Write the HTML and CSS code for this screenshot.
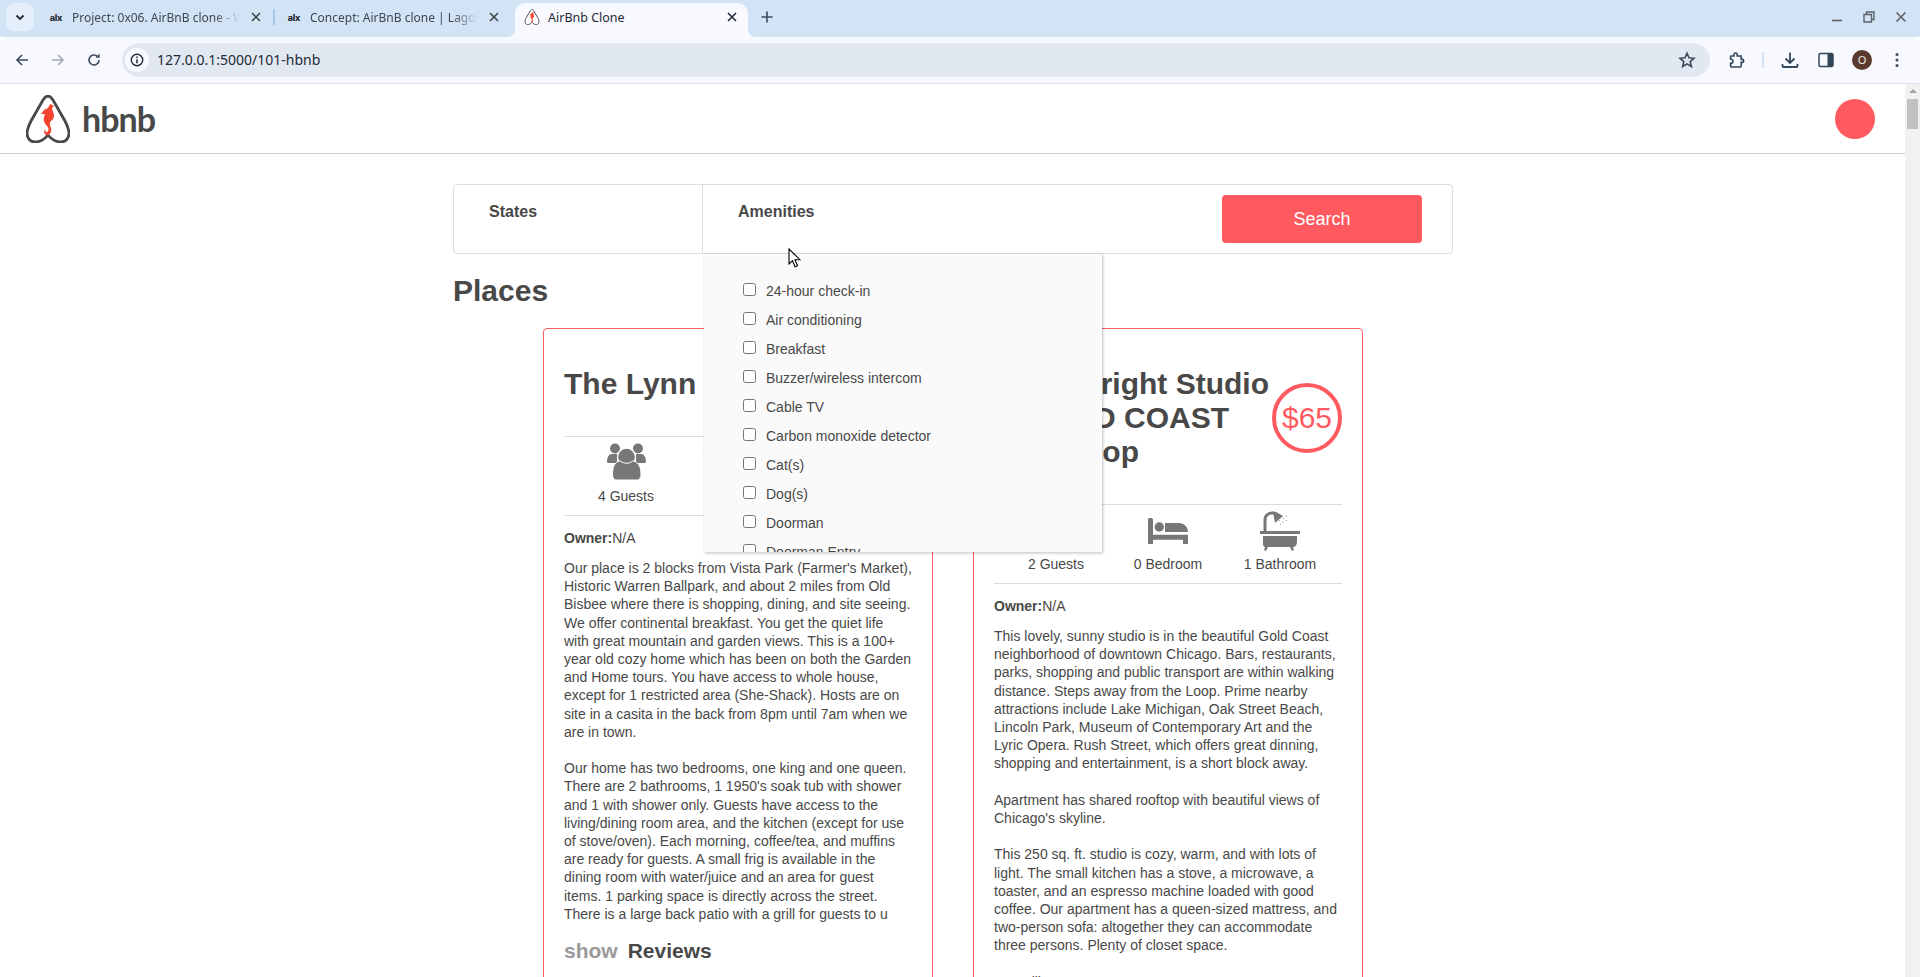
FILE: index.html
```html
<!DOCTYPE html>
<html lang="en">
<head>
    <meta charset="UTF-8">
    <meta name="viewport" content="width=device-width, initial-scale=1.0">
    <title>AirBnb Clone</title>
    <link rel="stylesheet" href="styles.css">
</head>
<body>
    <svg class="defs" width="0" height="0">
        <symbol id="belo" viewBox="0 0 44 48">
            <path d="M22 40C18 45 13 47 9 47 4 47 1 43 1 38 1 34 3 30 5 26L17 5C19 2 20 1 22 1 24 1 25 2 27 5L39 26C41 30 43 34 43 38 43 43 40 47 35 47 31 47 26 45 22 40Z" fill="#fff" stroke="#484848" stroke-width="2.8"/>
            <path d="M24 9 22 13 18 15 15 19 19 19 18 22C17 26 19 29 21 31 23 33 23 36 21 37 19 38 19 35 20 35 18 34 17 38 20 40 24 41 26 37 25 33 24 30 23 28 25 26 28 24 29 20 27 17L26 13 28 11Z" fill="#f4442e"/>
        </symbol>
    </svg>

    <!-- browser chrome -->
    <div class="tabstrip">
        <div class="tab-menu">
            <svg width="12" height="12" viewBox="0 0 12 12"><path d="M2.5 4.5 6 8l3.5-3.5" fill="none" stroke="#1f2937" stroke-width="1.8"/></svg>
        </div>
        <div class="tab">
            <span class="favicon-alx">alx</span>
            <span class="tab-title">Project: 0x06. AirBnB clone - W</span>
            <svg class="tab-close" width="16" height="16" viewBox="0 0 16 16"><path d="M4 4l8 8M12 4l-8 8" stroke="#3c4043" stroke-width="1.5"/></svg>
        </div>
        <div class="tab-sep"></div>
        <div class="tab">
            <span class="favicon-alx">alx</span>
            <span class="tab-title">Concept: AirBnB clone | Lagos</span>
            <svg class="tab-close" width="16" height="16" viewBox="0 0 16 16"><path d="M4 4l8 8M12 4l-8 8" stroke="#3c4043" stroke-width="1.5"/></svg>
        </div>
        <div class="tab tab-active">
            <svg class="favicon" width="16" height="16"><use href="#belo"/></svg>
            <span class="tab-title">AirBnb Clone</span>
            <svg class="tab-close" width="16" height="16" viewBox="0 0 16 16"><path d="M4 4l8 8M12 4l-8 8" stroke="#1f2937" stroke-width="1.6"/></svg>
        </div>
        <svg class="new-tab" width="16" height="16" viewBox="0 0 16 16"><path d="M8 2.5v11M2.5 8h11" stroke="#3c4a5c" stroke-width="1.6"/></svg>
        <div class="window-controls">
            <svg width="12" height="12" viewBox="0 0 12 12"><path d="M1 9.5h10" stroke="#5f6368" stroke-width="1.6"/></svg>
            <svg width="12" height="12" viewBox="0 0 12 12"><path d="M3.5 3V1h7.5v7.5H9" fill="none" stroke="#5f6368" stroke-width="1.4"/><path d="M1 3.5h7.5V11H1z" fill="none" stroke="#5f6368" stroke-width="1.4"/></svg>
            <svg width="12" height="12" viewBox="0 0 12 12"><path d="M1.5 1.5l9 9M10.5 1.5l-9 9" stroke="#5f6368" stroke-width="1.6"/></svg>
        </div>
    </div>
    <div class="toolbar">
        <div class="tool">
            <svg width="16" height="16" viewBox="0 0 16 16"><path d="M14 8H3M8 3 3 8l5 5" fill="none" stroke="#3c4a5c" stroke-width="1.6"/></svg>
        </div>
        <div class="tool">
            <svg width="16" height="16" viewBox="0 0 16 16"><path d="M2 8h11M8 3l5 5-5 5" fill="none" stroke="#a3a9b2" stroke-width="1.6"/></svg>
        </div>
        <div class="tool">
            <svg width="16" height="16" viewBox="0 0 16 16"><path d="M13 8a5 5 0 1 1-1.6-3.7" fill="none" stroke="#3c4a5c" stroke-width="1.6"/><path d="M13.6 1.6v4.2H9.4z" fill="#3c4a5c"/></svg>
        </div>
        <div class="omnibox">
            <div class="site-info">
                <svg width="14" height="14" viewBox="0 0 14 14"><circle cx="7" cy="7" r="5.7" fill="none" stroke="#1f2937" stroke-width="1.4"/><path d="M7 6.2v4M7 3.6v1.3" stroke="#1f2937" stroke-width="1.5"/></svg>
            </div>
            <span class="url">127.0.0.1:5000/101-hbnb</span>
            <svg class="star" width="18" height="18" viewBox="0 0 18 18"><path d="M9 2.2l2 4.6 5 .5-3.8 3.3 1.2 4.9L9 12.9l-4.4 2.6 1.2-4.9L2 7.3l5-.5z" fill="none" stroke="#3c4a5c" stroke-width="1.6"/></svg>
        </div>
        <div class="tool tool-ext">
            <svg width="18" height="18" viewBox="0 0 18 18"><path d="M3 5h3V3.600a1.600 1.600 0 0 1 3.200 0V5h4v3.400h1a1.500 1.500 0 0 1 0 3h-1V15a1 1 0 0 1-1 1H3.600a1 1 0 0 1-1-1v-2.800c2 .2 2.400-1 2.400-2S3.500 8 2.600 8V5.600A.6.6 0 0 1 3 5z" fill="none" stroke="#33475b" stroke-width="1.6"/></svg>
        </div>
        <div class="tool-sep"></div>
        <div class="tool">
            <svg width="18" height="18" viewBox="0 0 18 18"><path d="M9 1.500v10M4.500 7.500 9 12l4.500-4.500" fill="none" stroke="#33475b" stroke-width="1.8"/><path d="M1.500 13v2a1 1 0 0 0 1 1h13a1 1 0 0 0 1-1v-2" fill="none" stroke="#33475b" stroke-width="1.8"/></svg>
        </div>
        <div class="tool">
            <svg width="16" height="16" viewBox="0 0 16 16"><rect x="1" y="1.500" width="14" height="13" rx="1.500" fill="none" stroke="#33475b" stroke-width="1.500"/><path d="M9.500 1.500H14a1 1 0 0 1 1 1v11a1 1 0 0 1-1 1H9.500z" fill="#33475b"/></svg>
        </div>
        <div class="tool"><span class="avatar">O</span></div>
        <div class="tool tool-menu">
            <svg width="16" height="16" viewBox="0 0 16 16"><circle cx="8" cy="2.500" r="1.500" fill="#3c4a5c"/><circle cx="8" cy="8" r="1.500" fill="#3c4a5c"/><circle cx="8" cy="13.500" r="1.500" fill="#3c4a5c"/></svg>
        </div>
    </div>

    <div class="viewport">
        <div class="page">
            <header class="site-header">
                <div class="logo">
                    <svg width="44" height="48"><use href="#belo"/></svg>
                    <span class="logo-text">hbnb</span>
                </div>
                <div class="user-dot"></div>
            </header>

            <main class="content">
                <section class="filters">
                    <div class="filter filter-states">
                        <h3>States</h3>
                    </div>
                    <div class="filter filter-amenities">
                        <h3>Amenities</h3>
                        <div class="popover">
                            <ul>
                                <li><input type="checkbox"><span>24-hour check-in</span></li>
                                <li><input type="checkbox"><span>Air conditioning</span></li>
                                <li><input type="checkbox"><span>Breakfast</span></li>
                                <li><input type="checkbox"><span>Buzzer/wireless intercom</span></li>
                                <li><input type="checkbox"><span>Cable TV</span></li>
                                <li><input type="checkbox"><span>Carbon monoxide detector</span></li>
                                <li><input type="checkbox"><span>Cat(s)</span></li>
                                <li><input type="checkbox"><span>Dog(s)</span></li>
                                <li><input type="checkbox"><span>Doorman</span></li>
                                <li><input type="checkbox"><span>Doorman Entry</span></li>
                            </ul>
                        </div>
                    </div>
                    <button class="search-btn">Search</button>
                </section>

                <h1 class="places-title">Places</h1>

                <section class="places">
                    <article class="place">
                        <div class="place-head">
                            <h2>The Lynn</h2>
                        </div>
                        <div class="information">
                            <div class="info-item">
                                <svg class="icon" width="40" height="40" viewBox="0 0 40 40">
                                    <circle cx="9" cy="5.500" r="5"/><circle cx="32" cy="5.500" r="5"/>
                                    <path d="M1 19c0-5 2-8 5-8h5v9H2zM40 19c0-5-2-8-5-8h-5v9h9z"/>
                                    <circle cx="20.500" cy="14" r="9" stroke="#fff" stroke-width="1.400"/>
                                    <path d="M6.500 31c0-8 3-13 8-13 3 3 9 3 12 0 5 0 8.500 5 8.500 13 0 4-2 6-4 6H10.500c-2 0-4-2-4-6z" stroke="#fff" stroke-width="1"/>
                                </svg>
                                <span>4 Guests</span>
                            </div>
                            <div class="info-item"><span>0 Bedroom</span></div>
                            <div class="info-item"><span>1 Bathroom</span></div>
                        </div>
                        <p class="owner"><strong>Owner:</strong>N/A</p>
                        <p class="description">Our place is 2 blocks from Vista Park (Farmer's Market), Historic Warren Ballpark, and about 2 miles from Old Bisbee where there is shopping, dining, and site seeing. We offer continental breakfast. You get the quiet life with great mountain and garden views. This is a 100+ year old cozy home which has been on both the Garden and Home tours. You have access to whole house, except for 1 restricted area (She-Shack). Hosts are on site in a casita in the back from 8pm until 7am when we are in town.<br><br>Our home has two bedrooms, one king and one queen. There are 2 bathrooms, 1 1950's soak tub with shower and 1 with shower only. Guests have access to the living/dining room area, and the kitchen (except for use of stove/oven). Each morning, coffee/tea, and muffins are ready for guests. A small frig is available in the dining room with water/juice and an area for guest items. 1 parking space is directly across the street. There is a large back patio with a grill for guests to u</p>
                        <div class="reviews-head">
                            <span class="show">show</span>
                            <span class="reviews">Reviews</span>
                        </div>
                    </article>

                    <article class="place">
                        <div class="place-head">
                            <h2>Quiet Bright Studio in GOLD COAST near Loop</h2>
                            <div class="price">$65</div>
                        </div>
                        <div class="information">
                            <div class="info-item">
                                <span class="icon-gap"></span>
                                <span>2 Guests</span>
                            </div>
                            <div class="info-item">
                                <svg class="icon" width="40" height="40" viewBox="0 0 40 40">
                                    <path d="M1.500 7h2c1 0 1.500 1 1.500 2v14.700h35V33h-5v-4.300H5V33H0V8.500C0 7.500.5 7 1.500 7z"/>
                                    <circle cx="11.300" cy="16" r="4.700"/>
                                    <path d="M17 12h14c5 0 9 4 9 9H17z"/>
                                </svg>
                                <span>0 Bedroom</span>
                            </div>
                            <div class="info-item">
                                <svg class="icon" width="40" height="40" viewBox="0 0 40 40">
                                    <path d="M0 20h40v3H0z"/>
                                    <path d="M3 25h34v6c0 3-2 5-4 5l1 3-2 1-2-4H8l-2 4-2-1 1-3c-2 0-2-3-2-5z"/>
                                    <path d="M5 20V9c0-5 4-7 7-7h3" fill="none" stroke="#777" stroke-width="3"/>
                                    <path d="M13 1l3 0 7 4-8 7z"/>
                                    <path d="M19 10l1-1M22 12l1-1M23 8l1-1M26 6l1-1M26 10l1-1M20 14l1-1" stroke="#999" stroke-width="1"/>
                                </svg>
                                <span>1 Bathroom</span>
                            </div>
                        </div>
                        <p class="owner"><strong>Owner:</strong>N/A</p>
                        <p class="description">This lovely, sunny studio is in the beautiful Gold Coast neighborhood of downtown Chicago. Bars, restaurants, parks, shopping and public transport are within walking distance. Steps away from the Loop. Prime nearby attractions include Lake Michigan, Oak Street Beach, Lincoln Park, Museum of Contemporary Art and the Lyric Opera. Rush Street, which offers great dinning, shopping and entertainment, is a short block away.<br><br>Apartment has shared rooftop with beautiful views of Chicago's skyline.<br><br>This 250 sq. ft. studio is cozy, warm, and with lots of light. The small kitchen has a stove, a microwave, a toaster, and an espresso machine loaded with good coffee. Our apartment has a queen-sized mattress, and two-person sofa: altogether they can accommodate three persons. Plenty of closet space.<br><br>You will soon see a sunny room</p>
                    </article>
                </section>
            </main>
        </div>

        <div class="scrollbar">
            <div class="scroll-up"></div>
            <div class="scroll-thumb"></div>
        </div>
    </div>

    <svg class="cursor" width="13" height="20" viewBox="0 0 13 20"><path d="M1 1v15l3.500-3.300 2.500 6 2.500-1-2.500-6H12z" fill="#fff" stroke="#000" stroke-width="1.100"/></svg>
</body>
</html>
```

FILE: styles.css
```css
* {
    box-sizing: border-box;
}
html, body {
    margin: 0;
    height: 977px;
    overflow: hidden;
}
body {
    font-family: "Liberation Sans", Arial, sans-serif;
    color: #484848;
    background-color: #fff;
    position: relative;
}
.defs {
    position: absolute;
}

/* browser chrome */
.tabstrip {
    height: 37px;
    background-color: #d3e3f6;
    display: flex;
    align-items: flex-start;
    padding: 3px 0 0 6px;
    font-family: "Noto Sans", sans-serif;
    font-size: 12px;
}
.tab-menu {
    width: 28px;
    height: 28px;
    border-radius: 8px;
    background-color: #e4eefb;
    display: flex;
    align-items: center;
    justify-content: center;
    margin-right: 5px;
}
.tab {
    width: 233px;
    height: 34px;
    padding: 0 8px 6px 9px;
    display: flex;
    align-items: center;
    color: #3f4650;
    position: relative;
}
.tab-sep {
    width: 2px;
    height: 16px;
    margin: 6px 2px 0 1px;
    background-color: #a5c8ef;
}
.tab-active {
    margin-left: 5px;
    background-color: #f7f9fe;
    border-radius: 10px 10px 0 0;
    color: #1f2937;
    font-size: 12.5px;
}
.tab-active::before,
.tab-active::after {
    content: "";
    position: absolute;
    bottom: 0;
    width: 8px;
    height: 8px;
}
.tab-active::before {
    left: -8px;
    background: radial-gradient(circle at 0 0, transparent 8px, #f7f9fe 8px);
}
.tab-active::after {
    right: -8px;
    background: radial-gradient(circle at 100% 0, transparent 8px, #f7f9fe 8px);
}
.favicon-alx {
    width: 16px;
    flex: none;
    font-family: Inter, sans-serif;
    font-size: 9px;
    font-weight: 800;
    letter-spacing: -0.3px;
    text-align: center;
    color: #2b2f36;
}
.favicon {
    flex: none;
}
.tab-title {
    flex: 1;
    margin-left: 8px;
    white-space: nowrap;
    overflow: hidden;
    -webkit-mask-image: linear-gradient(to right, #000 85%, transparent 100%);
    mask-image: linear-gradient(to right, #000 85%, transparent 100%);
}
.tab-active .tab-title {
    -webkit-mask-image: none;
    mask-image: none;
}
.tab-close {
    flex: none;
    margin-left: 8px;
}
.new-tab {
    margin: 6px 0 0 11px;
}
.window-controls {
    margin-left: auto;
    padding: 8px 13px 0 0;
    display: flex;
    gap: 20px;
}

.toolbar {
    height: 47px;
    background-color: #f7f9fe;
    border-bottom: 1px solid #dfe4ec;
    border-radius: 8px 8px 0 0;
    display: flex;
    align-items: center;
    padding: 0 0 1px 4px;
    font-family: "Noto Sans", sans-serif;
}
.tool {
    width: 36px;
    height: 36px;
    flex: none;
    display: flex;
    align-items: center;
    justify-content: center;
}
.omnibox {
    width: 1588px;
    height: 34px;
    margin-left: 10px;
    border-radius: 17px;
    background-color: #e2e8f1;
    display: flex;
    align-items: center;
    padding: 0 14px 0 3px;
}
.site-info {
    width: 24px;
    height: 24px;
    border-radius: 12px;
    background-color: #f7f9fe;
    display: flex;
    align-items: center;
    justify-content: center;
}
.url {
    margin-left: 8px;
    font-size: 14px;
    color: #1f2937;
}
.star {
    margin-left: auto;
}
.tool-ext {
    margin-left: 9px;
}
.tool-sep {
    width: 2px;
    height: 16px;
    margin: 0 8px 0 7px;
    background-color: #cfe2f8;
}
.tool-menu {
    margin-left: -1px;
}
.avatar {
    width: 20px;
    height: 20px;
    border-radius: 50%;
    background-color: #5a3a2e;
    color: #f3e9e4;
    font-size: 11px;
    display: flex;
    align-items: center;
    justify-content: center;
}

/* page */
.viewport {
    height: 893px;
    display: flex;
}
.page {
    flex: 1;
    height: 893px;
    overflow: hidden;
}
.scrollbar {
    width: 15px;
    background-color: #f1f1f1;
    display: flex;
    flex-direction: column;
    align-items: center;
}
.scroll-up {
    margin-top: 5px;
    width: 0;
    height: 0;
    border-left: 4px solid transparent;
    border-right: 4px solid transparent;
    border-bottom: 4px solid #a3a3a3;
}
.scroll-thumb {
    width: 11px;
    height: 30px;
    margin-top: 6px;
    background-color: #c1c1c1;
}

.site-header {
    height: 70px;
    border-bottom: 1px solid #ccc;
    padding: 0 30px 0 26px;
    display: flex;
    align-items: center;
    justify-content: space-between;
}
.logo {
    display: flex;
    align-items: center;
    gap: 12px;
}
.logo-text {
    font-family: Lato, sans-serif;
    font-size: 34px;
    font-weight: 700;
    letter-spacing: -1px;
    color: #484848;
}
.user-dot {
    width: 40px;
    height: 40px;
    border-radius: 50%;
    background-color: #ff5a5f;
}

.content {
    width: 1000px;
    margin: 30px auto 0 453px;
}
.filters {
    height: 70px;
    border: 1px solid #ddd;
    border-radius: 4px;
    display: flex;
    align-items: center;
    padding-right: 30px;
}
.filter {
    height: 100%;
    padding-left: 35px;
}
.filter h3 {
    margin: 18px 0 0;
    font-size: 16px;
    line-height: 18px;
    color: #484848;
}
.filter-states {
    width: 249px;
    border-right: 1px solid #ddd;
}
.filter-amenities {
    flex: 1;
    position: relative;
}
.popover {
    position: absolute;
    top: 69px;
    left: 1px;
    width: 398px;
    height: 298px;
    background-color: #fafafa;
    box-shadow: 1px 1px 3px rgba(0, 0, 0, 0.25);
    overflow: hidden;
    z-index: 5;
    padding-top: 22px;
}
.popover ul {
    list-style: none;
    margin: 0;
    padding: 0 0 0 39px;
}
.popover li {
    height: 29px;
    display: flex;
    align-items: center;
    font-size: 14px;
}
.popover input {
    width: 13px;
    height: 13px;
    margin: 0 10px 2px 0;
}
.search-btn {
    width: 200px;
    height: 48px;
    border: none;
    border-radius: 4px;
    background-color: #ff5a5f;
    color: #fff;
    font-family: inherit;
    font-size: 18px;
}

.places-title {
    margin: 20px 0;
    font-size: 30px;
    line-height: 34px;
    color: #484848;
}
.places {
    display: flex;
    justify-content: center;
    gap: 40px;
}
.place {
    width: 390px;
    height: 900px;
    flex: none;
    border: 1px solid #ff5a5f;
    border-radius: 4px;
    padding: 20px;
}
.place-head {
    margin: 18px 0 35px;
    display: flex;
    align-items: center;
}
.place-head h2 {
    flex: 1;
    margin: 0;
    font-size: 30px;
    line-height: 34px;
    color: #484848;
}
.price {
    width: 70px;
    height: 70px;
    flex: none;
    border: 4px solid #ff5a5f;
    border-radius: 50%;
    color: #ff5a5f;
    font-size: 30px;
    display: flex;
    align-items: center;
    justify-content: center;
}
.information {
    height: 80px;
    border-top: 1px solid #ddd;
    border-bottom: 1px solid #ddd;
    display: flex;
    justify-content: space-evenly;
}
.info-item {
    width: 100px;
    padding-top: 6px;
    display: flex;
    flex-direction: column;
    align-items: center;
    font-size: 14px;
    line-height: 20px;
    gap: 3px;
}
.icon {
    fill: #777;
}
.icon-gap {
    height: 40px;
}
.owner {
    margin: 13px 0 0;
    font-size: 14px;
    line-height: 18px;
}
.description {
    margin: 12px 0 0;
    font-size: 14px;
    line-height: 18.2px;
}
.reviews-head {
    margin-top: 16px;
    font-size: 21px;
    line-height: 24px;
    font-weight: bold;
    display: flex;
    gap: 10px;
}
.show {
    color: #999;
}
.reviews {
    color: #484848;
}

.cursor {
    position: absolute;
    top: 248px;
    left: 788px;
    z-index: 10;
}
```
